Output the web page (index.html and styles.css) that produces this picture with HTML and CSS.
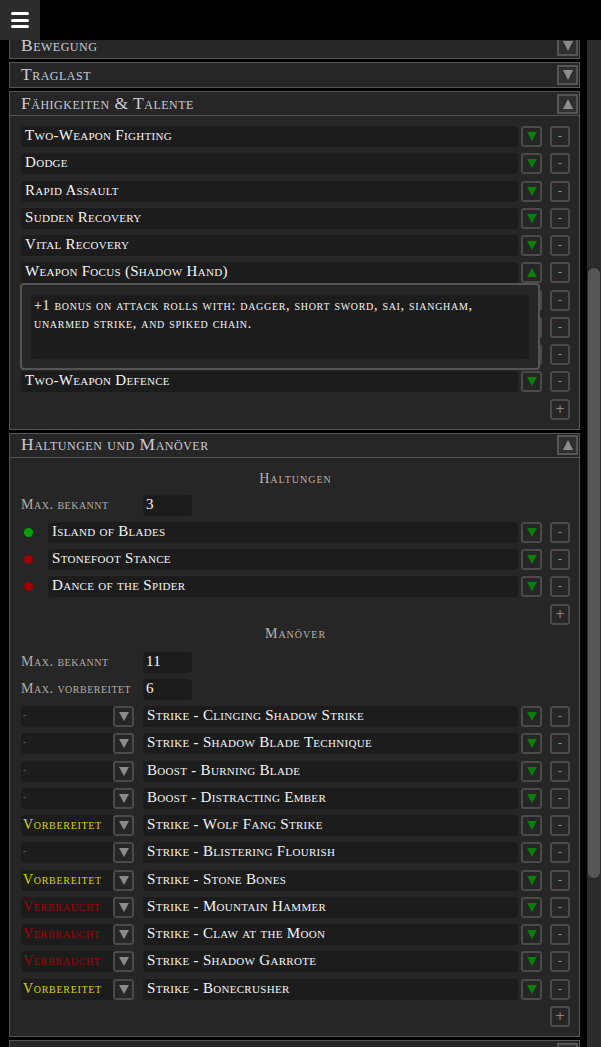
FILE: index.html
```html
<!DOCTYPE html>
<html lang="de">
<head>
<meta charset="utf-8">
<title>Charakterbogen</title>
<link rel="stylesheet" href="styles.css">
</head>
<body>
<header class="topbar">
  <button class="menu" aria-label="Menü"><span></span><span></span><span></span></button>
</header>
<div class="scrollbar"><div class="thumb"></div></div>

<main class="sheet">
  <section class="sec">
    <div class="sec-head"><h2>Bewegung</h2><button class="toggle down"></button></div>
  </section>

  <section class="sec">
    <div class="sec-head"><h2>Traglast</h2><button class="toggle down"></button></div>
  </section>

  <section class="sec open">
    <div class="sec-head"><h2>Fähigkeiten &amp; Talente</h2><button class="toggle up"></button></div>
    <div class="sec-body">
      <div class="rows">
        <div class="row"><div class="field">Two-Weapon Fighting</div><button class="arr"></button><button class="btn">-</button></div>
        <div class="row"><div class="field">Dodge</div><button class="arr"></button><button class="btn">-</button></div>
        <div class="row"><div class="field">Rapid Assault</div><button class="arr"></button><button class="btn">-</button></div>
        <div class="row"><div class="field">Sudden Recovery</div><button class="arr"></button><button class="btn">-</button></div>
        <div class="row"><div class="field">Vital Recovery</div><button class="arr"></button><button class="btn">-</button></div>
        <div class="row"><div class="field">Weapon Focus (Shadow Hand)</div><button class="arr up"></button><button class="btn">-</button>
          <div class="popup"><div class="desc">+1 bonus on attack rolls with: dagger, short sword, sai, siangham, unarmed strike, and spiked chain.</div></div>
        </div>
        <div class="row"><div class="field"></div><button class="arr"></button><button class="btn">-</button></div>
        <div class="row"><div class="field"></div><button class="arr"></button><button class="btn">-</button></div>
        <div class="row"><div class="field"></div><button class="arr"></button><button class="btn">-</button></div>
        <div class="row"><div class="field">Two-Weapon Defence</div><button class="arr"></button><button class="btn">-</button></div>
        <div class="row add"><button class="btn">+</button></div>
      </div>
    </div>
  </section>

  <section class="sec open">
    <div class="sec-head"><h2>Haltungen und Manöver</h2><button class="toggle up"></button></div>
    <div class="sec-body">
      <h3 class="subhead">Haltungen</h3>
      <div class="rows">
        <div class="row"><span class="label">Max. bekannt</span><div class="field num">3</div></div>
        <div class="row"><span class="dot on"></span><div class="field">Island of Blades</div><button class="arr"></button><button class="btn">-</button></div>
        <div class="row"><span class="dot off"></span><div class="field">Stonefoot Stance</div><button class="arr"></button><button class="btn">-</button></div>
        <div class="row"><span class="dot off"></span><div class="field">Dance of the Spider</div><button class="arr"></button><button class="btn">-</button></div>
        <div class="row add"><button class="btn">+</button></div>
      </div>

      <h3 class="subhead second">Manöver</h3>
      <div class="rows">
        <div class="row"><span class="label">Max. bekannt</span><div class="field num">11</div></div>
        <div class="row"><span class="label">Max. vorbereitet</span><div class="field num">6</div></div>
        <div class="row"><div class="select"><span class="sel-val none">-</span><span class="sel-arrow"></span></div><div class="field">Strike - Clinging Shadow Strike</div><button class="arr"></button><button class="btn">-</button></div>
        <div class="row"><div class="select"><span class="sel-val none">-</span><span class="sel-arrow"></span></div><div class="field">Strike - Shadow Blade Technique</div><button class="arr"></button><button class="btn">-</button></div>
        <div class="row"><div class="select"><span class="sel-val none">-</span><span class="sel-arrow"></span></div><div class="field">Boost - Burning Blade</div><button class="arr"></button><button class="btn">-</button></div>
        <div class="row"><div class="select"><span class="sel-val none">-</span><span class="sel-arrow"></span></div><div class="field">Boost - Distracting Ember</div><button class="arr"></button><button class="btn">-</button></div>
        <div class="row"><div class="select"><span class="sel-val ready">Vorbereitet</span><span class="sel-arrow"></span></div><div class="field">Strike - Wolf Fang Strike</div><button class="arr"></button><button class="btn">-</button></div>
        <div class="row"><div class="select"><span class="sel-val none">-</span><span class="sel-arrow"></span></div><div class="field">Strike - Blistering Flourish</div><button class="arr"></button><button class="btn">-</button></div>
        <div class="row"><div class="select"><span class="sel-val ready">Vorbereitet</span><span class="sel-arrow"></span></div><div class="field">Strike - Stone Bones</div><button class="arr"></button><button class="btn">-</button></div>
        <div class="row"><div class="select"><span class="sel-val used">Verbraucht</span><span class="sel-arrow"></span></div><div class="field">Strike - Mountain Hammer</div><button class="arr"></button><button class="btn">-</button></div>
        <div class="row"><div class="select"><span class="sel-val used">Verbraucht</span><span class="sel-arrow"></span></div><div class="field">Strike - Claw at the Moon</div><button class="arr"></button><button class="btn">-</button></div>
        <div class="row"><div class="select"><span class="sel-val used">Verbraucht</span><span class="sel-arrow"></span></div><div class="field">Strike - Shadow Garrote</div><button class="arr"></button><button class="btn">-</button></div>
        <div class="row"><div class="select"><span class="sel-val ready">Vorbereitet</span><span class="sel-arrow"></span></div><div class="field">Strike - Bonecrusher</div><button class="arr"></button><button class="btn">-</button></div>
        <div class="row add"><button class="btn">+</button></div>
      </div>
    </div>
  </section>

  <section class="sec">
    <div class="sec-head"><h2>Zauber</h2><button class="toggle down"></button></div>
  </section>
</main>
</body>
</html>
```

FILE: styles.css
```css
* { box-sizing: border-box; }

body {
  margin: 0;
  background: #000;
  font-family: "Liberation Serif", "Times New Roman", serif;
  font-variant: small-caps;
  color: #f2f2f2;
  overflow: hidden;
  height: 1047px;
}

button { font-family: inherit; font-variant: inherit; cursor: pointer; }

.topbar {
  position: fixed;
  top: 0; left: 0; right: 0;
  height: 40px;
  background: #000;
  z-index: 10;
}

.menu {
  width: 40px; height: 40px;
  background: #2b2b2b;
  border: 0; padding: 0;
  display: flex; flex-direction: column;
  align-items: center; justify-content: center;
  gap: 3.5px;
}
.menu span {
  display: block;
  width: 18px; height: 3px;
  background: #fff;
  border-radius: 2px;
}

.scrollbar {
  position: fixed;
  top: 40px; right: 0; bottom: 0;
  width: 14px;
  background: #2b2b2b;
  z-index: 5;
}
.thumb {
  position: absolute;
  top: 228px; left: 1px;
  width: 12px; height: 610px;
  background: #565656;
  border-radius: 6px;
}

.sheet {
  width: 580px;
  padding: 33px 0 0 9px;
}

.sec {
  border: 1px solid #555;
  background: #262626;
  margin-bottom: 3px;
}

.sec-head {
  height: 24px;
  display: flex;
  align-items: center;
  justify-content: space-between;
  padding: 0 1px 0 11px;
}
.open .sec-head { border-bottom: 1px solid #555; }

.sec-head h2 {
  margin: 0;
  font-size: 17.5px;
  font-weight: normal;
  letter-spacing: 0.5px;
  color: #c9ccd8;
  line-height: 1;
}

.toggle {
  width: 21px; height: 20px;
  border: 2px solid #555;
  background: #2f2f2f;
  padding: 0;
  display: flex; align-items: center; justify-content: center;
}
.toggle::before {
  content: "";
  border-left: 5.5px solid transparent;
  border-right: 5.5px solid transparent;
}
.toggle.down::before { border-top: 10px solid #8c8c8c; }
.toggle.up::before { border-bottom: 10px solid #8c8c8c; }

.sec-body { padding: 10px 9px 9px 11px; }

.rows {
  display: flex;
  flex-direction: column;
  gap: 6.25px;
}

.row {
  display: flex;
  align-items: center;
  height: 21px;
  position: relative;
}
.row.add { justify-content: flex-end; }

.field {
  flex: 1;
  min-width: 0;
  height: 21px;
  background: #1c1c1c;
  border-radius: 4px;
  padding: 0 4px;
  line-height: 18px;
  font-size: 15px;
  letter-spacing: 0.3px;
  color: #f6f6f6;
  white-space: nowrap;
  overflow: hidden;
}

.arr {
  flex: none;
  width: 21px; height: 21px;
  margin-left: 3px;
  border: 2px solid #4a4a4a;
  border-radius: 3px;
  background: transparent;
  padding: 0;
  display: flex; align-items: center; justify-content: center;
}
.arr::before {
  content: "";
  border-left: 5px solid transparent;
  border-right: 5px solid transparent;
  border-top: 9px solid #087f08;
}
.arr.up::before {
  border-top: 0;
  border-bottom: 9px solid #087f08;
}

.btn {
  flex: none;
  width: 20px; height: 21px;
  margin-left: 8px;
  border: 2px solid #4a4a4a;
  border-radius: 3px;
  background: transparent;
  padding: 0;
  color: #8a8a8a;
  font-family: "DejaVu Sans", sans-serif;
  font-size: 12px;
  line-height: 17px;
  text-align: center;
}

.popup {
  position: absolute;
  top: 21px; left: -1px;
  width: 520px; height: 87px;
  border: 2px solid #555;
  border-radius: 4px;
  background: #262626;
  padding: 10px 9px 9px 9px;
  z-index: 2;
}
.desc {
  height: 100%;
  background: #1c1c1c;
  border-radius: 4px;
  padding: 2px 3px;
  font-size: 14px;
  letter-spacing: 0.7px;
  line-height: 18px;
  color: #f4f4f4;
}

.subhead {
  margin: 0 0 8px;
  text-align: center;
  font-size: 14px;
  font-weight: normal;
  letter-spacing: 1px;
  line-height: 16px;
  color: #bdb4ac;
}
.sec-body > .subhead:first-child { margin-top: 3px; }
.subhead.second { margin: 1px 0 10px; }

.label {
  flex: none;
  width: 122px;
  font-size: 14px;
  letter-spacing: 0.5px;
  line-height: 18px;
  color: #b5aca4;
}
.field.num { flex: none; width: 49px; padding-left: 3px; }

.dot {
  flex: none;
  width: 9px; height: 9px;
  border-radius: 50%;
  margin: 0 15px 0 3px;
}
.dot.on { background: #0aa00a; }
.dot.off { background: #a00000; }

.select {
  flex: none;
  width: 113px; height: 21px;
  margin-right: 9px;
  display: flex;
  background: #1c1c1c;
  border-radius: 4px;
}
.sel-val {
  flex: 1;
  padding-left: 2px;
  line-height: 19px;
  font-size: 14px;
  letter-spacing: 0.7px;
  white-space: nowrap;
}
.sel-val.none { color: #777; font-size: 9px; }
.sel-val.ready { color: #d6d600; }
.sel-val.used { color: #a80000; }

.sel-arrow {
  flex: none;
  width: 21px; height: 21px;
  border: 2px solid #4a4a4a;
  border-radius: 3px;
  background: #262626;
  display: flex; align-items: center; justify-content: center;
}
.sel-arrow::before {
  content: "";
  border-left: 5px solid transparent;
  border-right: 5px solid transparent;
  border-top: 9px solid #8a8a8a;
}
```
